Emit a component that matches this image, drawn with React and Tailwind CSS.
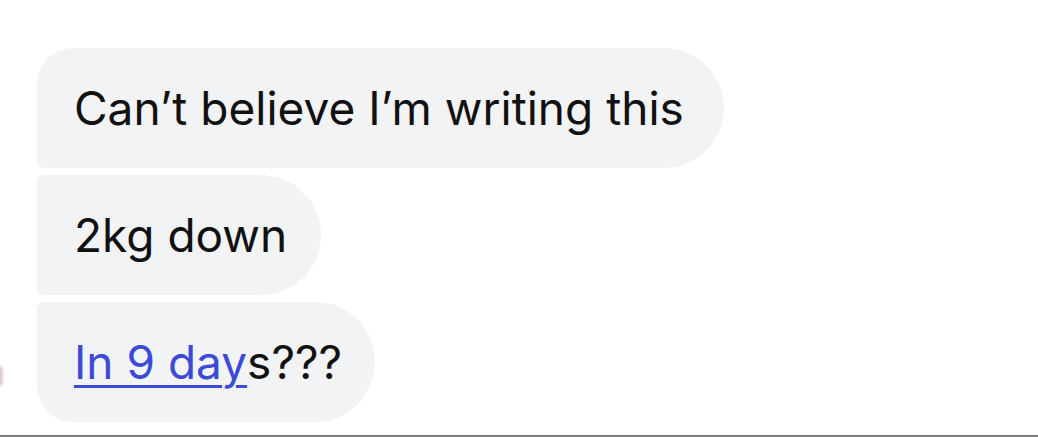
export default function App() {
  const font = { fontFamily: 'Inter, "Noto Sans", sans-serif' };
  return (
    <div className="relative w-[1038px] h-[437px] bg-white overflow-hidden" style={font}>
      <div className="absolute left-[-4px] top-[366px] w-[7px] h-[20px] rounded-full bg-[#b89a9a] opacity-50 blur-[1px]" />
      <div className="flex flex-col items-start gap-[7px] pt-[48px] pl-[37px]">
        <div className="h-[120px] flex items-center pl-[37px] pr-[40px] bg-[#f2f3f5] rounded-tl-[36px] rounded-bl-[6px] rounded-r-[60px]">
          <span className="text-[46px] leading-none text-[#111111]">Can’t believe I’m writing this</span>
        </div>
        <div className="h-[120px] flex items-center pl-[37px] pr-[34px] bg-[#f2f3f5] rounded-l-[6px] rounded-r-[60px]">
          <span className="text-[46px] leading-none text-[#111111]">2kg down</span>
        </div>
        <div className="h-[120px] flex items-center pl-[37px] pr-[33px] bg-[#f2f3f5] rounded-tl-[6px] rounded-bl-[36px] rounded-r-[60px]">
          <span className="text-[46px] leading-none text-[#111111]">
            <span className="text-[#3b4bd6] underline decoration-[3px] underline-offset-[6px]">In 9 day</span>s???
          </span>
        </div>
      </div>
      <div className="absolute left-0 right-0 bottom-0 h-[2px] bg-[#7f7f7f]" />
    </div>
  );
}
